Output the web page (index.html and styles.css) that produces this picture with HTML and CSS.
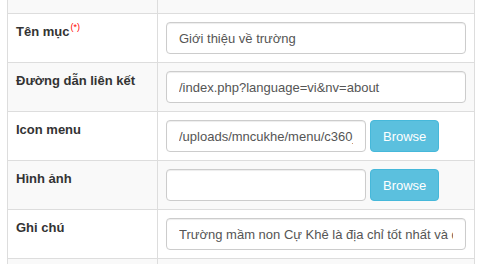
FILE: index.html
```html
<!DOCTYPE html>
<html lang="en">
<head>
    <meta charset="UTF-8">
    <meta name="viewport" content="width=device-width, initial-scale=1.0">
    <title>Menu</title>
    <link rel="stylesheet" href="styles.css">
</head>
<body>
    <!-- Menu form table -->
    <table class="form-table">
        <tbody>
            <tr class="row-cut">
                <td class="label-cell"></td>
                <td class="value-cell"></td>
            </tr>
            <tr>
                <td class="label-cell">Tên mục<sup class="required">(*)</sup></td>
                <td class="value-cell"><input type="text" class="form-control" value="Giới thiệu về trường"></td>
            </tr>
            <tr>
                <td class="label-cell">Đường dẫn liên kết</td>
                <td class="value-cell"><input type="text" class="form-control" value="/index.php?language=vi&amp;nv=about"></td>
            </tr>
            <tr>
                <td class="label-cell">Icon menu</td>
                <td class="value-cell">
                    <div class="file-group">
                        <input type="text" class="form-control file-input" value="/uploads/mncukhe/menu/c360_about.png">
                        <button type="button" class="btn-info">Browse</button>
                    </div>
                </td>
            </tr>
            <tr>
                <td class="label-cell">Hình ảnh</td>
                <td class="value-cell">
                    <div class="file-group">
                        <input type="text" class="form-control file-input" value="">
                        <button type="button" class="btn-info">Browse</button>
                    </div>
                </td>
            </tr>
            <tr>
                <td class="label-cell">Ghi chú</td>
                <td class="value-cell"><input type="text" class="form-control" value="Trường mầm non Cự Khê là địa chỉ tốt nhất và đáng tin cậy"></td>
            </tr>
            <tr class="row-cut">
                <td class="label-cell"></td>
                <td class="value-cell"></td>
            </tr>
        </tbody>
    </table>
</body>
</html>
```

FILE: styles.css
```css
/* Global styles */
body {
    margin: 0;
    background: #fff;
    font-family: 'Liberation Sans', Arial, sans-serif;
    font-size: 13px;
    line-height: 20px;
    color: #333;
}

/* Table styles */
.form-table {
    margin-left: 7px;
    width: 468px;
    border-collapse: separate;
    border-spacing: 0;
    border-left: 1px solid #ddd;
    border-right: 1px solid #ddd;
    table-layout: fixed;
}

.form-table td {
    padding: 8px;
    border-top: 1px solid #ddd;
    vertical-align: top;
    box-sizing: border-box;
}

.form-table tr:nth-child(odd) td {
    background-color: #f9f9f9;
}

.form-table tr:first-child td {
    border-top: none;
    padding: 0;
    height: 13px;
}

.form-table tr:last-child td {
    padding: 0;
    height: 6px;
}

.label-cell {
    width: 150px;
    border-right: 1px solid #ddd;
    font-weight: bold;
}

.required {
    color: #f00;
    font-weight: normal;
    font-size: 9px;
    line-height: 0;
    vertical-align: 6px;
    margin-left: 1px;
}

/* Input styles */
.form-control {
    display: block;
    width: 100%;
    height: 32px;
    padding: 6px 12px;
    border: 1px solid #ccc;
    border-radius: 4px;
    box-shadow: inset 0 1px 1px rgba(0, 0, 0, 0.075);
    box-sizing: border-box;
    font-family: inherit;
    font-size: 13px;
    color: #555;
    background: #fff;
    margin: 0;
}

.file-group {
    display: flex;
    gap: 4px;
}

.file-input {
    width: 200px;
}

/* Button styles */
.btn-info {
    height: 32px;
    width: 69px;
    padding: 6px 12px;
    background-color: #5bc0de;
    border: 1px solid #46b8da;
    border-radius: 4px;
    color: #fff;
    font-family: inherit;
    font-size: 13px;
    cursor: pointer;
    margin: 0;
}
```
